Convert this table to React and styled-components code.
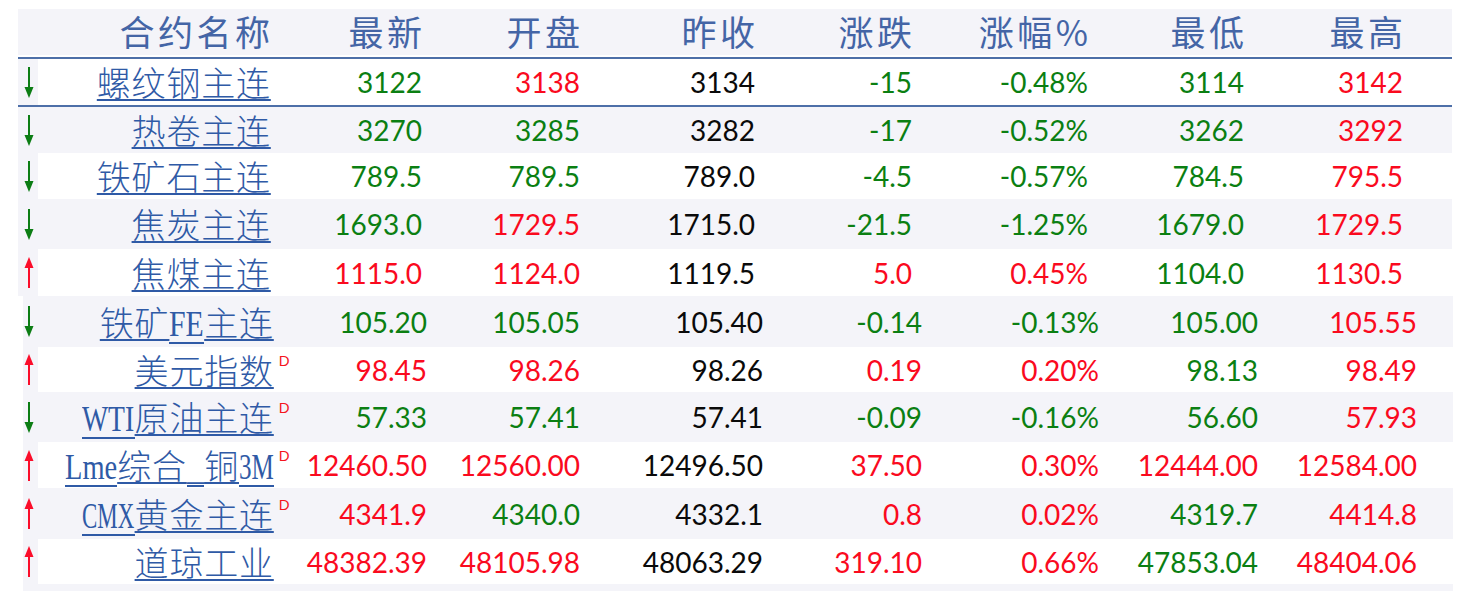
import React from "react";
import styled, { createGlobalStyle } from "styled-components";

const GREY = "#f4f4f9";
const BLUE_LINE = "#4d6fa8";
const COLORS = { g: "#0b7f12", r: "#fa0a1e", k: "#0a0a0a" };
const HALF = 17.4;
const LATIN_FONT = '36px "Liberation Serif"';

const GlobalStyle = createGlobalStyle`
  html, body { margin: 0; padding: 0; background: #ffffff; }
  body { font-family: Lato, "Noto Sans CJK SC", sans-serif; }
`;

const Page = styled.div`
  padding-top: 9px;
  display: flex;
  flex-direction: column;
`;

const Table = styled.div`
  margin-left: ${(p) => p.$left}px;
  width: ${(p) => p.$width}px;
  display: flex;
  flex-direction: column;
`;

const Row = styled.div`
  display: grid;
  grid-template-columns: ${(p) => p.$cols};
  height: ${(p) => p.$h}px;
  background: ${(p) => (p.$shade ? GREY : "#ffffff")};
  align-items: center;
`;

const HeaderRow = styled(Row)`
  background: ${GREY};
  align-items: end;
  padding-bottom: 4px;
  box-sizing: border-box;
`;

const Rule = styled.div`
  height: 2px;
  margin-top: ${(p) => p.$gap || 0}px;
  background: ${BLUE_LINE};
`;

const HeadCell = styled.div`
  text-align: right;
  font-family: "Noto Sans CJK SC", sans-serif;
  font-weight: 400;
  font-size: 35px;
  line-height: 40px;
  letter-spacing: 3.5px;
  margin-right: -3.5px;
  color: #4465a6;
`;

const ArrowCell = styled.div`
  align-self: stretch;
  background: ${GREY};
  display: flex;
  align-items: center;
  padding-left: ${(p) => p.$pad}px;
`;

const NameCell = styled.div`
  text-align: right;
  font-family: "Noto Sans CJK SC", sans-serif;
  font-weight: 300;
  font-size: 34px;
  line-height: 40px;
  letter-spacing: 0.8px;
  color: #2f5aa6;
  white-space: nowrap;
`;

const NameWrap = styled.span`
  position: relative;
  margin-right: -0.8px;
`;

const NameLink = styled.span`
  text-decoration: underline;
  text-decoration-thickness: 2px;
  text-underline-offset: 3px;
`;

const LatinBox = styled.span`
  display: inline-block;
  width: ${(p) => p.$n * HALF}px;
  white-space: nowrap;
  text-align: left;
  letter-spacing: 0;
  border-bottom: 2px solid #2f5aa6;
  line-height: 36px;
  margin-bottom: -5px;
`;

const LatinInner = styled.span`
  display: inline-block;
  transform-origin: left center;
  font-family: "Liberation Serif", serif;
  font-size: 36px;
`;

const Sup = styled.span`
  position: absolute;
  left: 100%;
  top: 8px;
  margin-left: 5px;
  font-family: "Liberation Sans", sans-serif;
  font-size: 15px;
  line-height: 15px;
  letter-spacing: 0;
  color: #f5141e;
`;

const NumCell = styled.div`
  text-align: right;
  font-family: Lato, sans-serif;
  font-size: 28px;
  line-height: 34px;
  color: ${(p) => COLORS[p.$c]};
`;

const BottomStrip = styled.div`
  height: 7px;
  background: ${GREY};
`;

let ctx = null;
const latinScale = (text) => {
  if (typeof document === "undefined") return 1;
  if (!ctx) ctx = document.createElement("canvas").getContext("2d");
  ctx.font = LATIN_FONT;
  const w = ctx.measureText(text).width || 1;
  return Math.min(1, (text.length * HALF) / w);
};

const Latin = ({ text }) => (
  <LatinBox $n={text.length}>
    <LatinInner style={{ transform: `scaleX(${latinScale(text)})` }}>{text}</LatinInner>
  </LatinBox>
);

const Arrow = ({ up }) => {
  const color = up ? "#fb0d2a" : "#0c7d14";
  return (
    <svg width="10" height="31" viewBox="0 0 10 31">
      {up ? (
        <>
          <line x1="5" y1="8" x2="5" y2="31" stroke={color} strokeWidth="2" />
          <polygon points="5,0 9.5,11 0.5,11" fill={color} />
        </>
      ) : (
        <>
          <line x1="5" y1="0" x2="5" y2="23" stroke={color} strokeWidth="2" />
          <polygon points="5,31 9.5,20 0.5,20" fill={color} />
        </>
      )}
    </svg>
  );
};

const TOP_COLS = "20px 232px 152px 158px 175px 157px 176px 156px 159px 1fr";
const BOTTOM_COLS = "15px 235px 154px 153px 183px 159px 177px 159px 159px 1fr";

const HEADERS = ["合约名称", "最新", "开盘", "昨收", "涨跌", "涨幅%", "最低", "最高"];

const TOP_ROWS = [
  { up: false, name: [["c", "螺纹钢主连"]], h: 46, shade: false, v: [["3122", "g"], ["3138", "r"], ["3134", "k"], ["-15", "g"], ["-0.48%", "g"], ["3114", "g"], ["3142", "r"]] },
  { up: false, name: [["c", "热卷主连"]], h: 46, shade: true, v: [["3270", "g"], ["3285", "g"], ["3282", "k"], ["-17", "g"], ["-0.52%", "g"], ["3262", "g"], ["3292", "r"]] },
  { up: false, name: [["c", "铁矿石主连"]], h: 46, shade: false, v: [["789.5", "g"], ["789.5", "g"], ["789.0", "k"], ["-4.5", "g"], ["-0.57%", "g"], ["784.5", "g"], ["795.5", "r"]] },
  { up: false, name: [["c", "焦炭主连"]], h: 50, shade: true, v: [["1693.0", "g"], ["1729.5", "r"], ["1715.0", "k"], ["-21.5", "g"], ["-1.25%", "g"], ["1679.0", "g"], ["1729.5", "r"]] },
  { up: true, name: [["c", "焦煤主连"]], h: 47, shade: false, v: [["1115.0", "r"], ["1124.0", "r"], ["1119.5", "k"], ["5.0", "r"], ["0.45%", "r"], ["1104.0", "g"], ["1130.5", "r"]] },
];

const BOTTOM_ROWS = [
  { up: false, name: [["c", "铁矿"], ["l", "FE"], ["c", "主连"]], h: 51, shade: true, v: [["105.20", "g"], ["105.05", "g"], ["105.40", "k"], ["-0.14", "g"], ["-0.13%", "g"], ["105.00", "g"], ["105.55", "r"]] },
  { up: true, sup: true, name: [["c", "美元指数"]], h: 45, shade: false, v: [["98.45", "r"], ["98.26", "r"], ["98.26", "k"], ["0.19", "r"], ["0.20%", "r"], ["98.13", "g"], ["98.49", "r"]] },
  { up: false, sup: true, name: [["l", "WTI"], ["c", "原油主连"]], h: 50, shade: true, v: [["57.33", "g"], ["57.41", "g"], ["57.41", "k"], ["-0.09", "g"], ["-0.16%", "g"], ["56.60", "g"], ["57.93", "r"]] },
  { up: true, sup: true, name: [["l", "Lme"], ["c", "综合"], ["l", "_"], ["c", "铜"], ["l", "3M"]], h: 46, shade: false, v: [["12460.50", "r"], ["12560.00", "r"], ["12496.50", "k"], ["37.50", "r"], ["0.30%", "r"], ["12444.00", "r"], ["12584.00", "r"]] },
  { up: true, sup: true, name: [["l", "CMX"], ["c", "黄金主连"]], h: 51, shade: true, v: [["4341.9", "r"], ["4340.0", "g"], ["4332.1", "k"], ["0.8", "r"], ["0.02%", "r"], ["4319.7", "g"], ["4414.8", "r"]] },
  { up: true, name: [["c", "道琼工业"]], h: 45, shade: false, v: [["48382.39", "r"], ["48105.98", "r"], ["48063.29", "k"], ["319.10", "r"], ["0.66%", "r"], ["47853.04", "g"], ["48404.06", "r"]] },
];

const Name = ({ parts, sup }) => (
  <NameWrap>
    <NameLink>
      {parts.map(([kind, text], i) =>
        kind === "l" ? <Latin key={i} text={text} /> : <React.Fragment key={i}>{text}</React.Fragment>
      )}
    </NameLink>
    {sup && <Sup>D</Sup>}
  </NameWrap>
);

const DataRow = ({ row, cols, pad }) => (
  <Row $cols={cols} $h={row.h} $shade={row.shade}>
    <ArrowCell $pad={pad}>
      <Arrow up={row.up} />
    </ArrowCell>
    <NameCell>
      <Name parts={row.name} sup={row.sup} />
    </NameCell>
    {row.v.map(([val, c], i) => (
      <NumCell key={i} $c={c}>
        {val}
      </NumCell>
    ))}
    <span />
  </Row>
);

export default function App() {
  return (
    <>
      <GlobalStyle />
      <Page>
        <Table $left={18} $width={1434}>
          <HeaderRow $cols={TOP_COLS} $h={46}>
            <span />
            {HEADERS.map((h) => (
              <HeadCell key={h}>{h}</HeadCell>
            ))}
            <span />
          </HeaderRow>
          <Rule $gap={2} />
          <DataRow row={TOP_ROWS[0]} cols={TOP_COLS} pad={6} />
          <Rule />
          {TOP_ROWS.slice(1).map((r, i) => (
            <DataRow key={i} row={r} cols={TOP_COLS} pad={6} />
          ))}
        </Table>
        <Table $left={23} $width={1430}>
          {BOTTOM_ROWS.map((r, i) => (
            <DataRow key={i} row={r} cols={BOTTOM_COLS} pad={1} />
          ))}
          <BottomStrip />
        </Table>
      </Page>
    </>
  );
}
